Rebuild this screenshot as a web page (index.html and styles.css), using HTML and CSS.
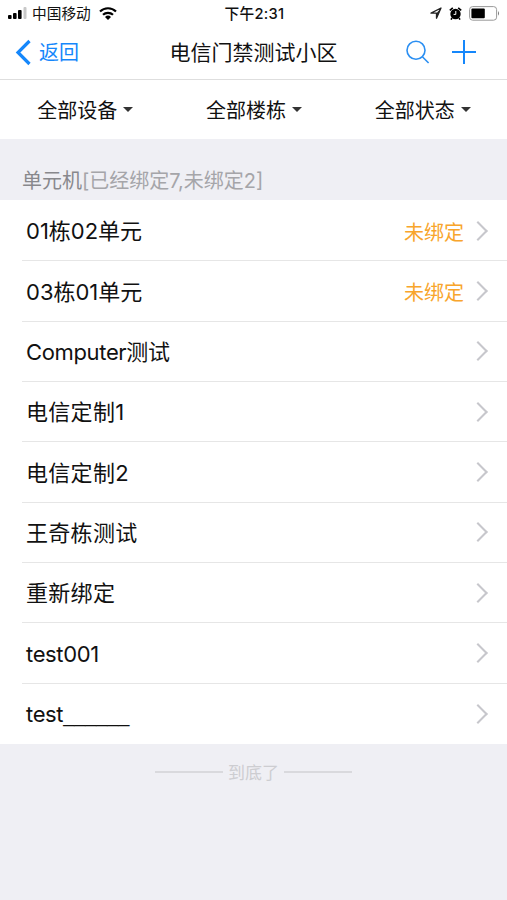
FILE: index.html
```html
<!DOCTYPE html>
<html lang="zh-CN">
<head>
	<meta charset="UTF-8">
	<meta name="viewport" content="width=device-width, initial-scale=1">
	<title>电信门禁测试小区</title>
	<link rel="stylesheet" href="styles.css">
</head>
<body>
	<header class="header">
		<div class="status">
			<div class="status-left">
				<svg class="signal" width="19" height="12" viewBox="0 0 19 12">
					<rect x="0" y="8" width="3.6" height="4" rx="1"/>
					<rect x="5" y="6" width="3.6" height="6" rx="1"/>
					<rect x="10" y="3" width="3.6" height="9" rx="1"/>
					<rect x="15.5" y="0" width="3" height="12" rx="1" fill="#c8c8c8"/>
				</svg>
				<span class="carrier">中国移动</span>
				<svg class="wifi" width="18" height="13" viewBox="0 0 18 13">
					<path d="M1 4.5a11.5 11.5 0 0 1 16 0M4 7.8a7.2 7.2 0 0 1 10 0" fill="none" stroke="#000" stroke-width="2.2"/>
					<path d="M6 10a4.3 4.3 0 0 1 6 0l-3 3z"/>
				</svg>
			</div>
			<span class="time">下午2:31</span>
			<div class="status-right">
				<svg width="12" height="12" viewBox="0 0 12 12"><path d="M1 6.2L11 1 6.5 11.2V6.2z" fill="none" stroke="#222" stroke-width="1.3" stroke-linejoin="round"/><path d="M6.5 6.2L11 1 6.5 11.2z" fill="#222"/></svg>
				<svg width="13" height="13" viewBox="0 0 13 13">
					<circle cx="6.5" cy="7" r="5.2"/>
					<path d="M.8 3.4L3.8 .8M12.2 3.4L9.2 .8M3 11l-1 1.6M10 11l1 1.6" stroke="#000" stroke-width="1.6"/>
					<path d="M6.8 4v3.4H4.6" fill="none" stroke="#fff"/>
				</svg>
				<svg width="31" height="15" viewBox="0 0 31 15">
					<rect x=".6" y=".6" width="27" height="13.6" rx="3" fill="none" stroke="#999"/>
					<rect x="2.4" y="2.6" width="13.4" height="9.6" rx="1"/>
					<path d="M29 5q2 2.4 0 4.8z" fill="#777"/>
				</svg>
			</div>
		</div>
		<div class="nav">
			<a class="back">
				<svg width="17" height="27" viewBox="0 0 17 27"><path d="M14.5 2L3 13.5 14.5 25" fill="none" stroke="#1587fb" stroke-width="3.2"/></svg>
				<span>返回</span>
			</a>
			<h1 class="title">电信门禁测试小区</h1>
			<div class="actions">
				<svg width="24" height="24" viewBox="0 0 24 24"><path d="M16.4 16.8L22.6 23M19 10.2a9 9 0 1 1-18 0 9 9 0 0 1 18 0z" fill="none" stroke="#2b8ff2" stroke-width="1.6"/></svg>
				<svg width="24" height="24" viewBox="0 0 24 24"><path d="M12 0v24M0 12h24" stroke="#1587fb" stroke-width="2"/></svg>
			</div>
		</div>
	</header>
	<div class="filter">
		<div class="filter-item">全部设备</div>
		<div class="filter-item">全部楼栋</div>
		<div class="filter-item">全部状态</div>
	</div>
	<h2 class="group">单元机<span class="count">[已经绑定7,未绑定2]</span></h2>
	<ul class="list">
		<li class="cell"><span class="name">01栋02单元</span><span class="state">未绑定</span><i class="arrow"></i></li>
		<li class="cell"><span class="name">03栋01单元</span><span class="state">未绑定</span><i class="arrow"></i></li>
		<li class="cell"><span class="name name-latin">Computer测试</span><i class="arrow"></i></li>
		<li class="cell"><span class="name name-cjk">电信定制1</span><i class="arrow"></i></li>
		<li class="cell"><span class="name name-cjk">电信定制2</span><i class="arrow"></i></li>
		<li class="cell"><span class="name name-cjk">王奇栋测试</span><i class="arrow"></i></li>
		<li class="cell"><span class="name name-cjk">重新绑定</span><i class="arrow"></i></li>
		<li class="cell"><span class="name name-latin">test001</span><i class="arrow"></i></li>
		<li class="cell"><span class="name name-latin">test<span class="blank">______</span></span><i class="arrow"></i></li>
	</ul>
	<div class="bottom">到底了</div>
</body>
</html>
```
FILE: styles.css
```css
*{
	box-sizing: border-box;
}
body{
	margin:0;
	min-height:100vh;
	background:#efeff4;
	color:#111;
	font-family: Inter,"Noto Sans CJK SC",sans-serif;
}
svg{
	display:block;
}

/* 顶部 */
.header{
	height:80px;
	background:#fff;
	border-bottom:1px solid #dedede;
}
.status{
	display:grid;
	grid-template-columns:1fr auto 1fr;
	align-items:center;
	height:26px;
	padding:0 7px 0 8px;
}
.status-left,.status-right{
	display:flex;
	align-items:center;
}
.status-right{
	justify-content:flex-end;
	gap:7px;
}
.carrier{
	margin:0 8px 0 5px;
	padding-top:2px;
	font-size:14.7px;
	line-height:20px;
}
.time{
	padding:2px 0 0 1px;
	font-size:14.7px;
	font-weight:500;
	letter-spacing:.3px;
	line-height:20px;
}
.nav{
	display:grid;
	grid-template-columns:1fr auto 1fr;
	align-items:center;
	height:52px;
	padding:0 15px;
}
.back{
	display:flex;
	align-items:center;
	gap:7px;
	color:#1587fb;
	font-size:20px;
	line-height:28px;
}
.back span,.title{
	padding-top:2px;
}
.title{
	margin:0;
	font-size:21px;
	font-weight:400;
	line-height:28px;
}
.actions{
	display:flex;
	justify-content:flex-end;
	gap:22px;
	padding-right:16px;
}

/* 筛选 */
.filter{
	display:flex;
	height:59px;
	padding-left:1px;
	background:#fff;
}
.filter-item{
	display:flex;
	flex:1;
	align-items:center;
	justify-content:center;
	font-size:20px;
}
.filter-item:after{
	margin-left:6px;
	border:5px solid transparent;
	border-top-color:#333;
	border-bottom:0;
	content:'';
}

/* 列表 */
.group{
	height:61px;
	margin:0;
	padding:27px 22px 0;
	color:#88888c;
	font-size:20px;
	font-weight:400;
	line-height:30px;
}
.count{
	color:#a5a5a9;
}
.list{
	margin:0;
	padding:1px 0 0 22px;
	background:#fff;
	list-style:none;
}
.cell{
	display:flex;
	align-items:center;
	height:60.35px;
	padding:0 22px 0 4px;
	border-bottom:1px solid #e6e6e6;
}
.cell:last-child{
	border-bottom:0;
}
.name{
	flex:1;
	padding-top:1px;
	font-size:22px;
	line-height:30px;
}
.name-latin{
	letter-spacing:-.35px;
}
.name-cjk{
	letter-spacing:.3px;
}
.blank{
	font-family:"Liberation Sans",sans-serif;
	font-size:20px;
	letter-spacing:-.1px;
}
.state{
	margin-right:7px;
	padding-top:1px;
	color:#f8a52c;
	font-size:20px;
}
.arrow{
	width:14px;
	height:14px;
	border:solid #c7c7cc;
	border-width:2px 2px 0 0;
	transform:rotate(45deg);
}
.bottom{
	display:flex;
	align-items:center;
	justify-content:center;
	gap:5px;
	height:55px;
	color:#cdcdd1;
	font-size:17px;
}
.bottom:before,.bottom:after{
	width:68px;
	height:2px;
	background:#d9d9dd;
	content:'';
}
```
